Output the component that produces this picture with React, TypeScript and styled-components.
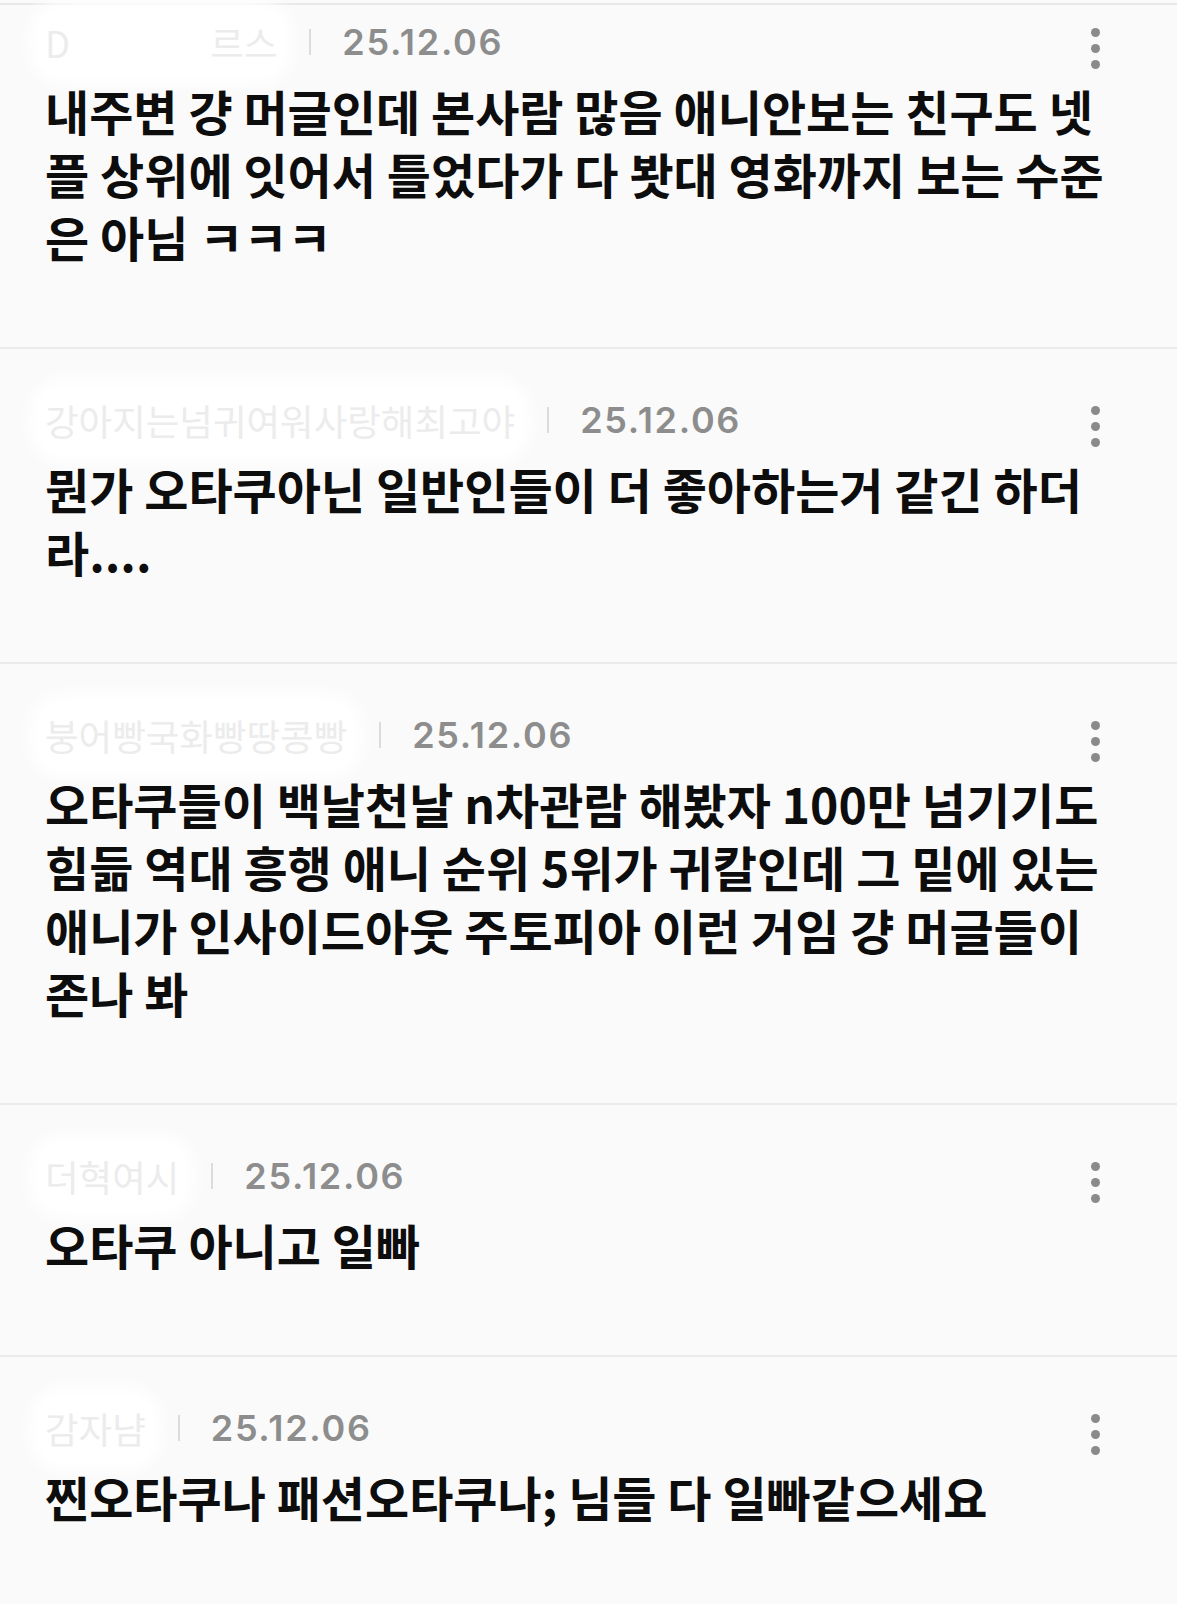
import React from 'react';
import styled, { createGlobalStyle } from 'styled-components';

const GlobalStyle = createGlobalStyle`
  html, body {
    margin: 0;
    padding: 0;
    background: #fafafa;
  }
  body {
    font-family: 'Noto Sans CJK KR', 'Noto Sans', sans-serif;
    -webkit-font-smoothing: antialiased;
  }
`;

const Page = styled.div`
  width: 1177px;
  min-height: 1604px;
  background: #fafafa;
  padding-top: 3px;
  box-sizing: border-box;
  overflow: hidden;
`;

const List = styled.ul`
  list-style: none;
  margin: 0;
  padding: 0;
  border-top: 2px solid #e8e8e8;
`;

const Item = styled.li<{ $compact?: boolean }>`
  padding: ${(p) => (p.$compact ? '15px' : '49px')} 55px 79px 45px;
  border-bottom: 2px solid #ebebeb;
  &:last-child {
    border-bottom: 0;
  }
`;

const Meta = styled.div`
  display: flex;
  align-items: center;
  height: 44px;
`;

const Nick = styled.span`
  font-size: 36.5px;
  font-weight: 400;
  color: #ececec;
  white-space: nowrap;
  background: #fff;
  border-radius: 18px;
  box-shadow: 0 0 16px 16px #fff;
`;

const Hidden = styled.span`
  display: inline-block;
  width: 140px;
`;

const Sep = styled.span`
  width: 2px;
  height: 26px;
  background: #dcdcdc;
  margin: 0 31px 0 32px;
`;

const Date = styled.span`
  font-family: Inter, 'Liberation Sans', sans-serif;
  font-size: 36px;
  font-weight: 600;
  color: #8d8d8d;
  letter-spacing: 1.7px;
`;

const More = styled.button`
  margin-left: auto;
  margin-right: 22px;
  margin-top: 12px;
  padding: 0;
  border: 0;
  background: none;
  display: flex;
  flex-direction: column;
  gap: 7px;
  span {
    width: 9px;
    height: 9px;
    border-radius: 50%;
    background: #8a8a8a;
  }
`;

const Body = styled.p`
  margin: 15px 0 0;
  font-size: 48px;
  font-weight: 700;
  line-height: 63px;
  color: #0d0d0d;
  word-break: break-all;
`;

type Comment = {
  nick: React.ReactNode;
  date: string;
  text: string;
};

const comments: Comment[] = [
  {
    nick: (
      <>
        D<Hidden />르스
      </>
    ),
    date: '25.12.06',
    text: '내주변 걍 머글인데 본사람 많음 애니안보는 친구도 넷플 상위에 잇어서 틀었다가 다 봣대 영화까지 보는 수준은 아님 ㅋㅋㅋ',
  },
  {
    nick: '강아지는넘귀여워사랑해최고야',
    date: '25.12.06',
    text: '뭔가 오타쿠아닌 일반인들이 더 좋아하는거 같긴 하더라....',
  },
  {
    nick: '붕어빵국화빵땅콩빵',
    date: '25.12.06',
    text: '오타쿠들이 백날천날 n차관람 해봤자 100만 넘기기도 힘듦 역대 흥행 애니 순위 5위가 귀칼인데 그 밑에 있는 애니가 인사이드아웃 주토피아 이런 거임 걍 머글들이 존나 봐',
  },
  {
    nick: '더혁여시',
    date: '25.12.06',
    text: '오타쿠 아니고 일빠',
  },
  {
    nick: '감자냠',
    date: '25.12.06',
    text: '찐오타쿠나 패션오타쿠나; 님들 다 일빠같으세요',
  },
];

export default function App() {
  return (
    <Page>
      <GlobalStyle />
      <List>
        {comments.map((c, i) => (
          <Item key={i} $compact={i === 0}>
            <Meta>
              <Nick>{c.nick}</Nick>
              <Sep />
              <Date>{c.date}</Date>
              <More aria-label='more'>
                <span />
                <span />
                <span />
              </More>
            </Meta>
            <Body>{c.text}</Body>
          </Item>
        ))}
      </List>
    </Page>
  );
}
